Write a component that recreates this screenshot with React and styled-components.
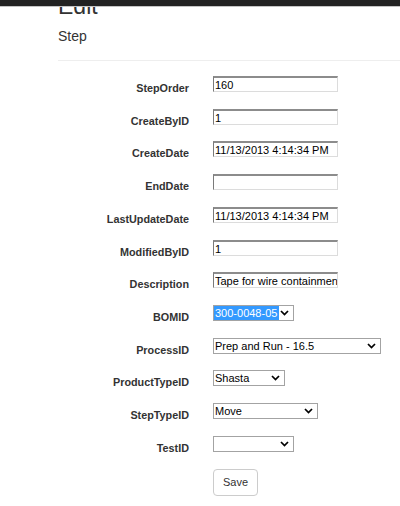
import React from "react";
import styled, { createGlobalStyle } from "styled-components";

const Global = createGlobalStyle`
  html, body { margin: 0; padding: 0; background: #fff; }
  body { font-family: "Liberation Sans", Arial, sans-serif; color: #333; overflow: hidden; }
`;

const NavBar = styled.div`
  position: fixed;
  top: 0;
  left: 0;
  right: 0;
  height: 6px;
  background: #222;
  border-bottom: 1px solid #c4c4c4;
  z-index: 10;
`;

const Page = styled.div`
  padding-left: 58px;
`;

const Title = styled.h2`
  margin: -5.5px 0 0;
  font-size: 23px;
  line-height: 23px;
  font-weight: 400;
  color: #333;
`;

const Subtitle = styled.h4`
  margin: 10.5px 0 0;
  font-size: 14px;
  line-height: 16px;
  font-weight: 400;
  color: #333;
`;

const Rule = styled.hr`
  margin: 16px 0 0;
  border: 0;
  border-top: 1px solid #eee;
  height: 0;
`;

const Form = styled.form`
  margin-top: 15px;
  display: grid;
  grid-template-columns: 131px auto;
  column-gap: 24px;
  grid-auto-rows: 32.73px;
  align-items: start;
`;

const Label = styled.label`
  text-align: right;
  font-size: 10.8px;
  line-height: 13px;
  font-weight: 700;
  color: #333;
  padding-top: 6px;
  white-space: nowrap;
`;

const TextInput = styled.input`
  box-sizing: border-box;
  width: 125px;
  height: 16px;
  margin: 0;
  padding: 1px 0 0 1px;
  font-family: "Liberation Sans", Arial, sans-serif;
  font-size: 11px;
  line-height: 12px;
  color: #000;
  background: #fff;
  border-top: 2px solid #8c8c8c;
  border-left: 1px solid #7a7a7a;
  border-right: 1px solid #dcdcdc;
  border-bottom: 1px solid #dcdcdc;
  outline: none;
`;

const SelectBox = styled.div`
  box-sizing: border-box;
  width: ${(p) => p.$w}px;
  height: 16px;
  border: 1px solid #a3a3a3;
  background: #fff;
  display: flex;
  align-items: flex-start;
  justify-content: space-between;
`;

const SelectText = styled.span`
  font-size: 11px;
  line-height: 12px;
  padding: 1px 2px 1px 1px;
  color: ${(p) => (p.$active ? "#fff" : "#000")};
  background: ${(p) => (p.$active ? "#3399ff" : "transparent")};
  height: ${(p) => (p.$active ? "12px" : "auto")};
  white-space: nowrap;
`;

const Chevron = styled.svg`
  flex: none;
  width: 9px;
  height: 6px;
  margin: 4px 4px 0 0;
`;

const Spacer = styled.div``;

const SaveButton = styled.button`
  box-sizing: border-box;
  width: 45px;
  height: 27px;
  padding: 0;
  background: #fff;
  border: 1px solid #ccc;
  border-radius: 4px;
  font-family: "Liberation Sans", Arial, sans-serif;
  font-size: 11px;
  color: #333;
  cursor: pointer;
`;

const Arrow = () => (
  <Chevron viewBox="0 0 9 6">
    <polyline points="1,1 4.5,4.6 8,1" fill="none" stroke="#000" strokeWidth="1.7" />
  </Chevron>
);

const inputs = [
  ["StepOrder", "160"],
  ["CreateByID", "1"],
  ["CreateDate", "11/13/2013 4:14:34 PM"],
  ["EndDate", ""],
  ["LastUpdateDate", "11/13/2013 4:14:34 PM"],
  ["ModifiedByID", "1"],
  ["Description", "Tape for wire containment"],
];

const selects = [
  ["BOMID", "300-0048-05", 81, true],
  ["ProcessID", "Prep and Run - 16.5", 168, false],
  ["ProductTypeID", "Shasta", 72, false],
  ["StepTypeID", "Move", 105, false],
  ["TestID", "", 81, false],
];

export default function App() {
  return (
    <>
      <Global />
      <NavBar />
      <Page>
        <Title>Edit</Title>
        <Subtitle>Step</Subtitle>
        <Rule />
        <Form onSubmit={(e) => e.preventDefault()}>
          {inputs.map(([name, value]) => (
            <React.Fragment key={name}>
              <Label htmlFor={name}>{name}</Label>
              <TextInput id={name} defaultValue={value} />
            </React.Fragment>
          ))}
          {selects.map(([name, value, w, active]) => (
            <React.Fragment key={name}>
              <Label>{name}</Label>
              <SelectBox $w={w}>
                <SelectText $active={active}>{value}</SelectText>
                <Arrow />
              </SelectBox>
            </React.Fragment>
          ))}
          <Spacer />
          <div>
            <SaveButton type="submit">Save</SaveButton>
          </div>
        </Form>
      </Page>
    </>
  );
}
